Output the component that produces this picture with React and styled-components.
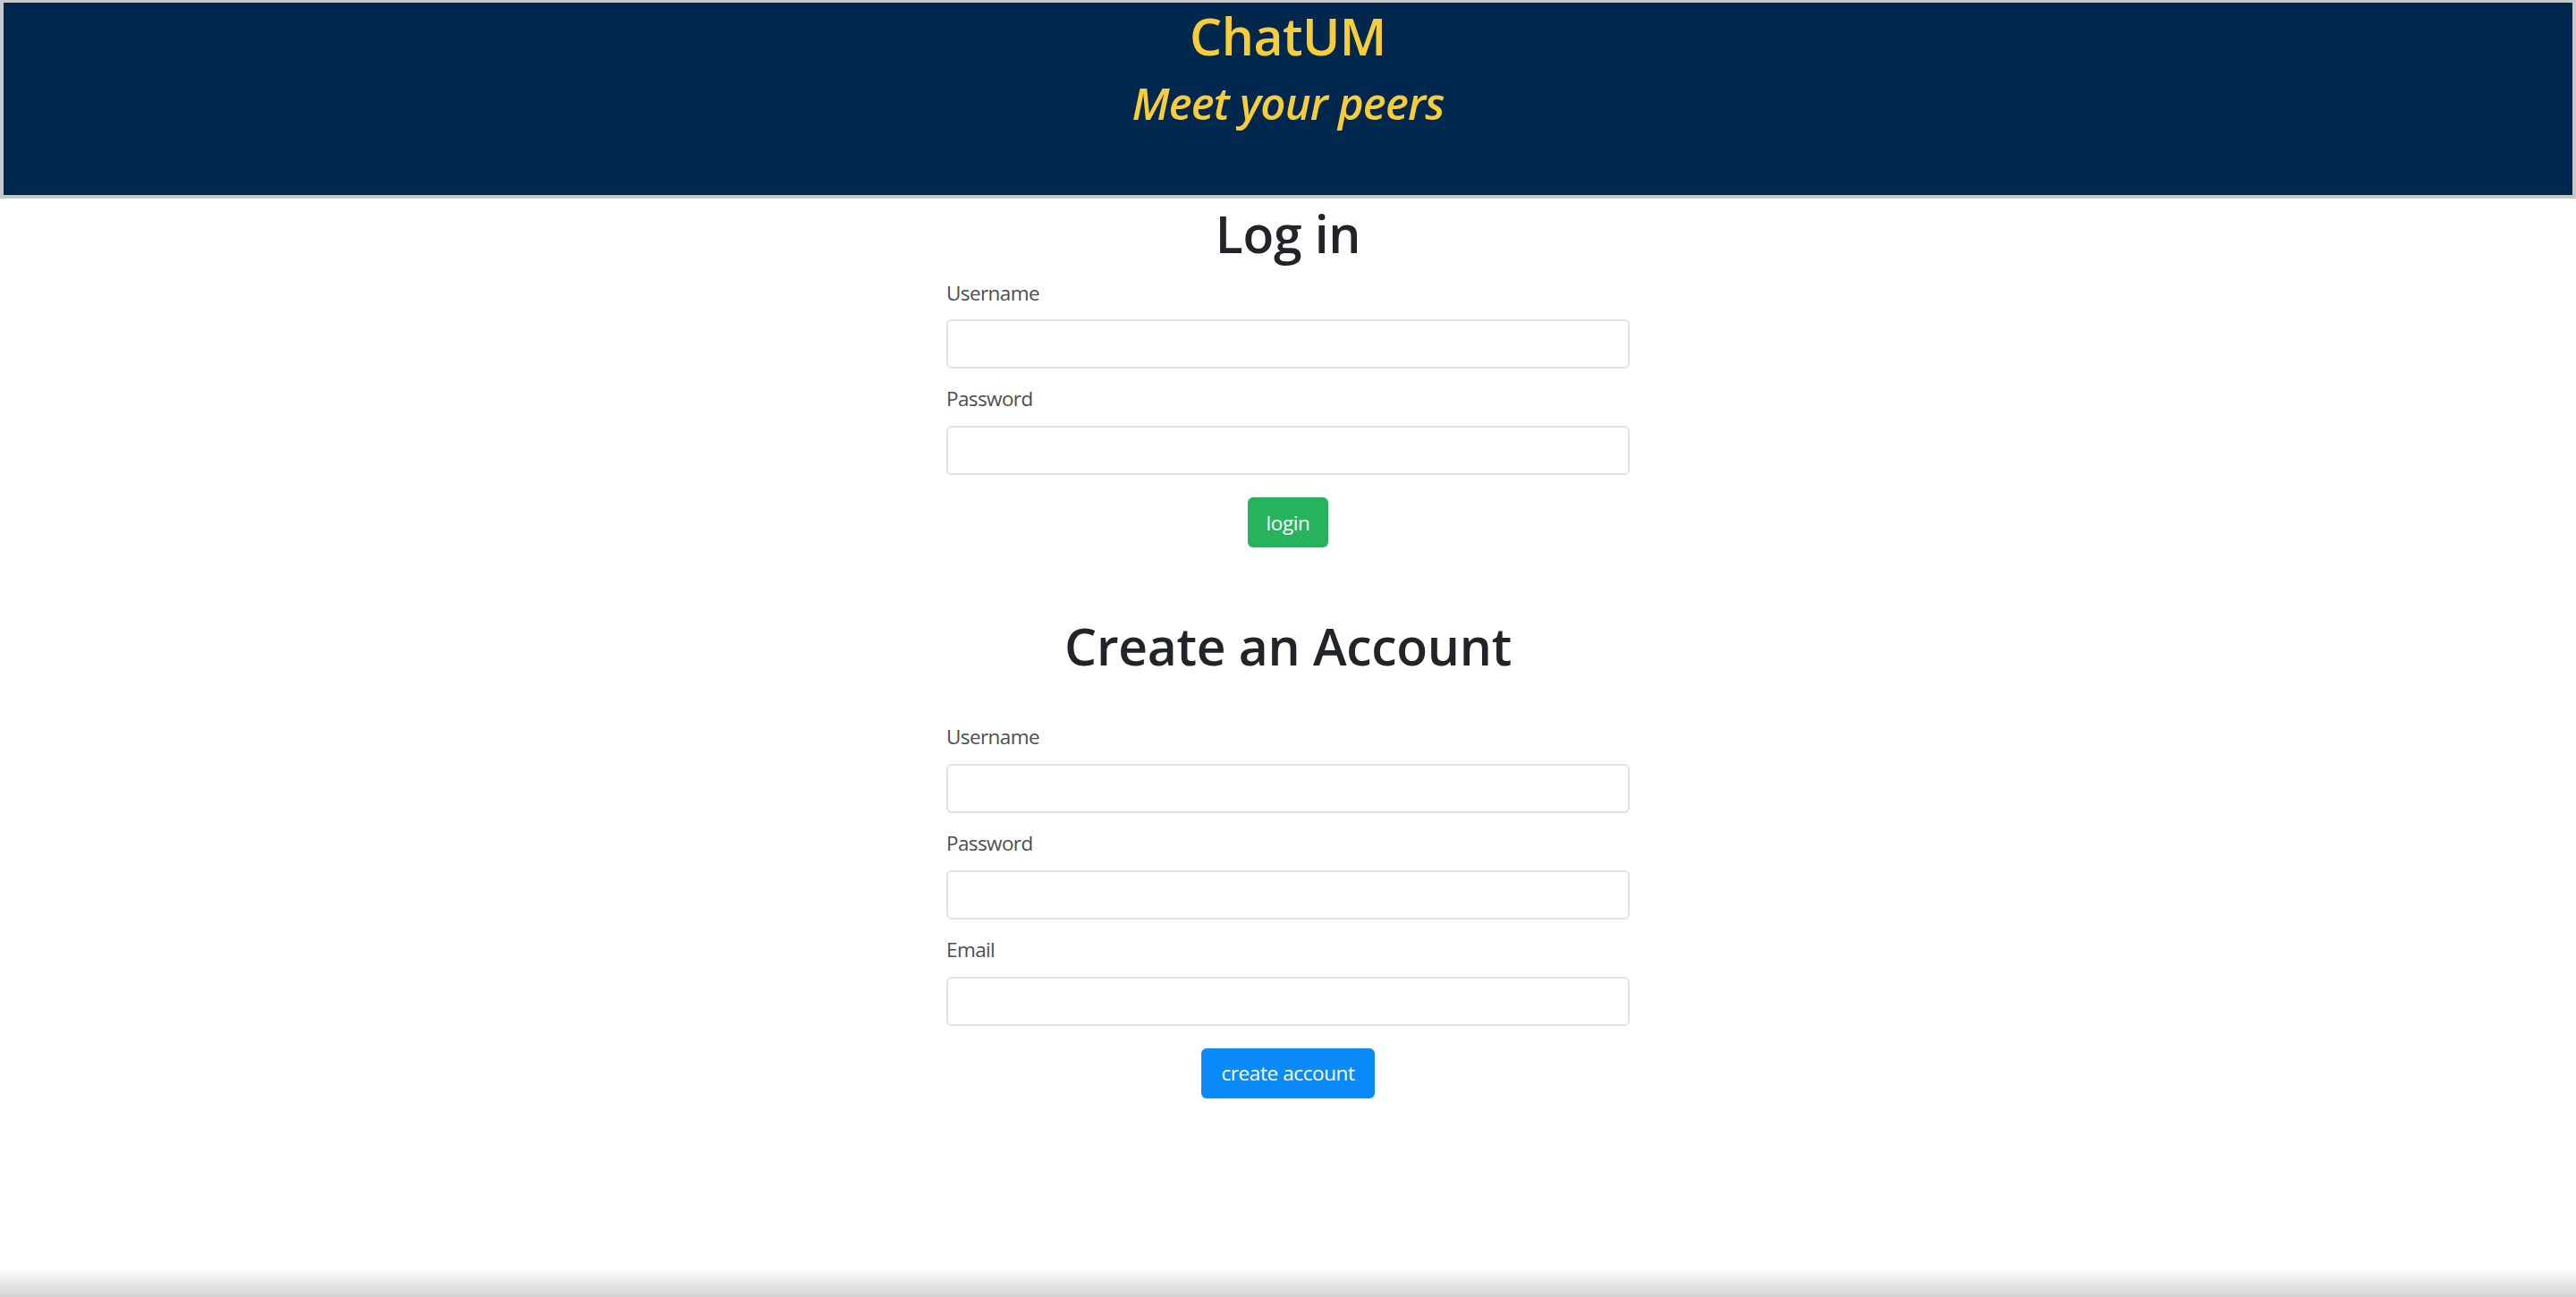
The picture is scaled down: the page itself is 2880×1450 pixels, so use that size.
import React from "react"
import styled, { createGlobalStyle } from "styled-components"

const GlobalStyle = createGlobalStyle`
  html, body {
    margin: 0;
    padding: 0;
    background: #ffffff;
    font-family: "Open Sans", "Noto Sans", sans-serif;
    color: #212529;
  }
  * {
    box-sizing: border-box;
  }
`

const Page = styled.div`
  display: flex;
  flex-direction: column;
  min-height: 100vh;
`

const Header = styled.header`
  background: #00284e;
  border: 4px solid #c6c8ca;
  border-top-width: 3px;
  padding: 3px 0 73px;
  text-align: center;
  color: #f8cd3a;

  & h1 {
    margin: 0;
    font-size: 57px;
    line-height: 1.2;
    font-weight: 600;
    letter-spacing: -0.5px;
  }

  & h2 {
    margin: 12px 0 0;
    font-size: 49px;
    line-height: 1.2;
    font-weight: 600;
    font-style: italic;
    letter-spacing: -0.8px;
  }
`

const Main = styled.main`
  flex: 1;
  width: 764px;
  margin: 0 auto;
`

const Section = styled.section`
  display: flex;
  flex-direction: column;
  margin-top: ${(p) => p.$top}px;
`

const Heading = styled.h2`
  margin: 0 0 ${(p) => p.$gap}px;
  text-align: center;
  font-size: 57px;
  line-height: 1.2;
  font-weight: 600;
  color: #212529;
  letter-spacing: -0.3px;
`

const Field = styled.div`
  display: flex;
  flex-direction: column;
  margin-bottom: 17px;

  &:last-of-type {
    margin-bottom: 25px;
  }
`

const Label = styled.label`
  font-size: 22.5px;
  line-height: 1.5;
  color: #4a4f55;
  margin-bottom: 13px;
  letter-spacing: -0.6px;
`

const Input = styled.input`
  height: 55px;
  width: 100%;
  border: 2px solid #e0e2e5;
  border-radius: 6px;
  background: #ffffff;
  padding: 0 18px;
  font-size: 22px;
  font-family: inherit;
  outline: none;
`

const Button = styled.button`
  align-self: center;
  height: 56px;
  padding: 0 ${(p) => (p.$variant === "success" ? 21 : 22)}px;
  border: none;
  border-radius: 6px;
  background: ${(p) => (p.$variant === "success" ? "#27b35b" : "#0b8bfa")};
  color: #ffffff;
  font-family: inherit;
  font-size: 22.5px;
  letter-spacing: -0.4px;
  cursor: pointer;
`

const BottomShade = styled.div`
  height: 32px;
  background: linear-gradient(to bottom, #ffffff, #d3d3d3);
`

const FormField = ({ label, type }) => (
  <Field>
    <Label>{label}</Label>
    <Input type={type} />
  </Field>
)

const App = () => {
  return (
    <Page>
      <GlobalStyle />
      <Header>
        <h1>ChatUM</h1>
        <h2>Meet your peers</h2>
      </Header>
      <Main>
        <Section $top={5}>
          <Heading $gap={15}>Log in</Heading>
          <FormField label="Username" type="text" />
          <FormField label="Password" type="password" />
          <Button $variant="success">login</Button>
        </Section>
        <Section $top={76}>
          <Heading $gap={51}>Create an Account</Heading>
          <FormField label="Username" type="text" />
          <FormField label="Password" type="password" />
          <FormField label="Email" type="email" />
          <Button $variant="primary">create account</Button>
        </Section>
      </Main>
      <BottomShade />
    </Page>
  )
}

export default App
